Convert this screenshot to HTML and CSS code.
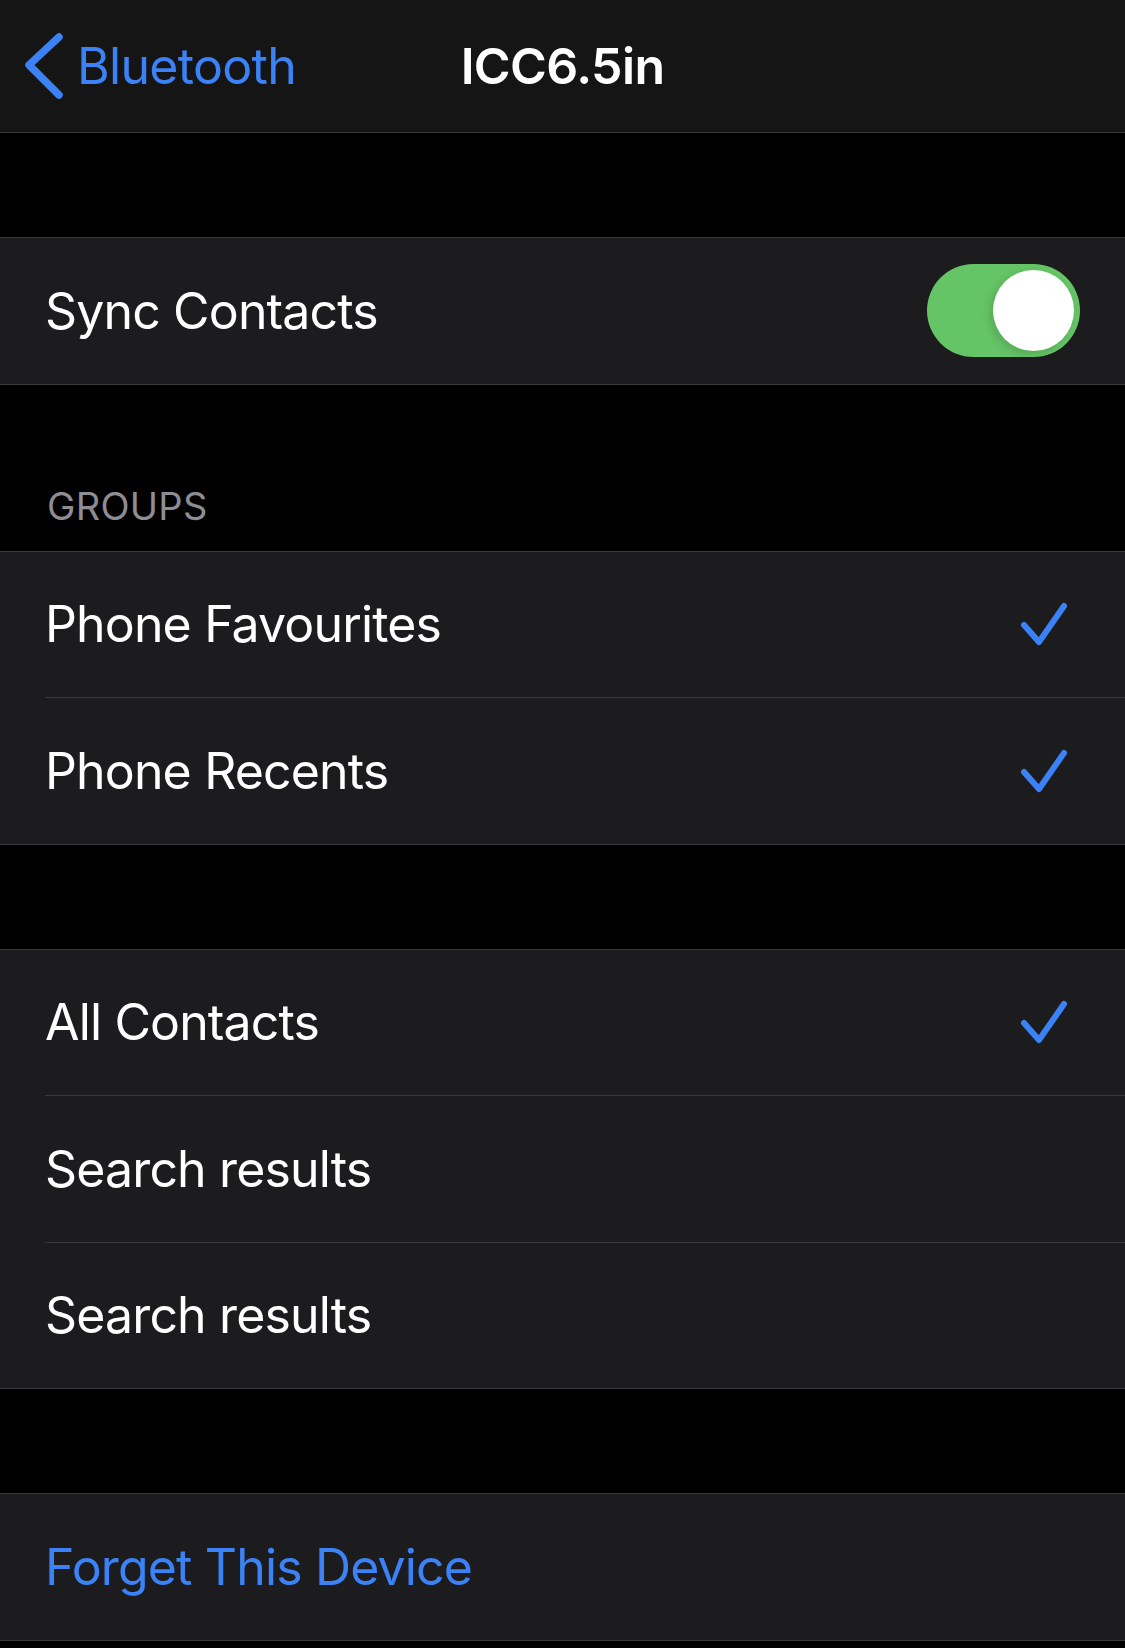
FILE: index.html
```html
<!DOCTYPE html>
<html lang="en">
<head>
    <meta charset="UTF-8">
    <title>ICC6.5in</title>
    <link rel="stylesheet" href="styles.css">
</head>
<body>

<header class="navbar">
    <a class="back" href="#">
        <svg class="chevron" width="40" height="70" viewBox="0 0 40 70">
            <polyline points="34,6 4,34 34,64" />
        </svg>
        <span>Bluetooth</span>
    </a>
    <h1 class="title">ICC6.5in</h1>
    <div></div>
</header>

<div class="gap"></div>

<section class="group">
    <div class="row">
        <span class="label">Sync Contacts</span>
        <span class="toggle on"><span class="knob"></span></span>
    </div>
</section>

<div class="group-header">GROUPS</div>

<section class="group">
    <div class="row">
        <span class="label">Phone Favourites</span>
        <svg class="check" width="50" height="48" viewBox="0 0 50 48"><polyline points="5,25 20,42 45,6" /></svg>
    </div>
    <div class="row">
        <span class="label">Phone Recents</span>
        <svg class="check" width="50" height="48" viewBox="0 0 50 48"><polyline points="5,25 20,42 45,6" /></svg>
    </div>
</section>

<div class="gap"></div>

<section class="group">
    <div class="row">
        <span class="label">All Contacts</span>
        <svg class="check" width="50" height="48" viewBox="0 0 50 48"><polyline points="5,25 20,42 45,6" /></svg>
    </div>
    <div class="row">
        <span class="label">Search results</span>
    </div>
    <div class="row">
        <span class="label">Search results</span>
    </div>
</section>

<div class="gap"></div>

<section class="group">
    <div class="row">
        <a class="label action" href="#">Forget This Device</a>
    </div>
</section>

</body>
</html>
```

FILE: styles.css
```css
* { margin: 0; padding: 0; box-sizing: border-box; }
html, body { width: 100%; }
body {
    background: #000;
    color: #fff;
    font-family: Inter, "Noto Sans", sans-serif;
    -webkit-font-smoothing: antialiased;
}
a { text-decoration: none; }

/* nav bar */
.navbar {
    height: 133px;
    background: #151515;
    border-bottom: 1px solid #3a3a3c;
    display: grid;
    grid-template-columns: 1fr auto 1fr;
    align-items: center;
}
.back {
    display: flex;
    align-items: center;
    padding-left: 25px;
    color: #3b82f6;
    font-size: 50px;
    letter-spacing: -0.7px;
}
.back span { margin-left: 12px; }
.chevron {
    fill: none;
    stroke: #3b82f6;
    stroke-width: 7.5;
    stroke-linecap: round;
    stroke-linejoin: round;
}
.title {
    font-size: 50px;
    font-weight: 600;
    letter-spacing: -0.6px;
}

/* sections */
.gap { height: 104px; }
.group {
    background: #1c1c1e;
    border-top: 1px solid #3a3a3c;
    border-bottom: 1px solid #3a3a3c;
}
.row {
    height: 146.5px;
    padding: 0 45px;
    display: flex;
    align-items: center;
    justify-content: space-between;
    position: relative;
}
.row + .row { border-top: 1px solid transparent; }
.row + .row::before {
    content: "";
    position: absolute;
    top: -1px;
    left: 45px;
    right: 0;
    height: 1px;
    background: #3a3a3c;
}
.group .row:first-child { height: 145.5px; }
.label {
    font-size: 50px;
    letter-spacing: -0.85px;
}
.action { color: #3b82f6; }

.group-header {
    height: 166px;
    display: flex;
    align-items: flex-end;
    padding: 0 47px 22px;
    font-size: 38px;
    color: #8d8d93;
    letter-spacing: 0.3px;
}

/* toggle switch */
.toggle {
    width: 153px;
    height: 93px;
    border-radius: 47px;
    background: #65c466;
    padding: 6px;
    display: flex;
    justify-content: flex-end;
}
.knob {
    width: 81px;
    height: 81px;
    border-radius: 50%;
    background: #fff;
    box-shadow: -3px 3px 8px rgba(0, 0, 0, 0.15);
}

/* checkmark */
.check {
    margin-right: 11px;
    fill: none;
    stroke: #3b82f6;
    stroke-width: 6;
    stroke-linecap: round;
    stroke-linejoin: round;
}
```
